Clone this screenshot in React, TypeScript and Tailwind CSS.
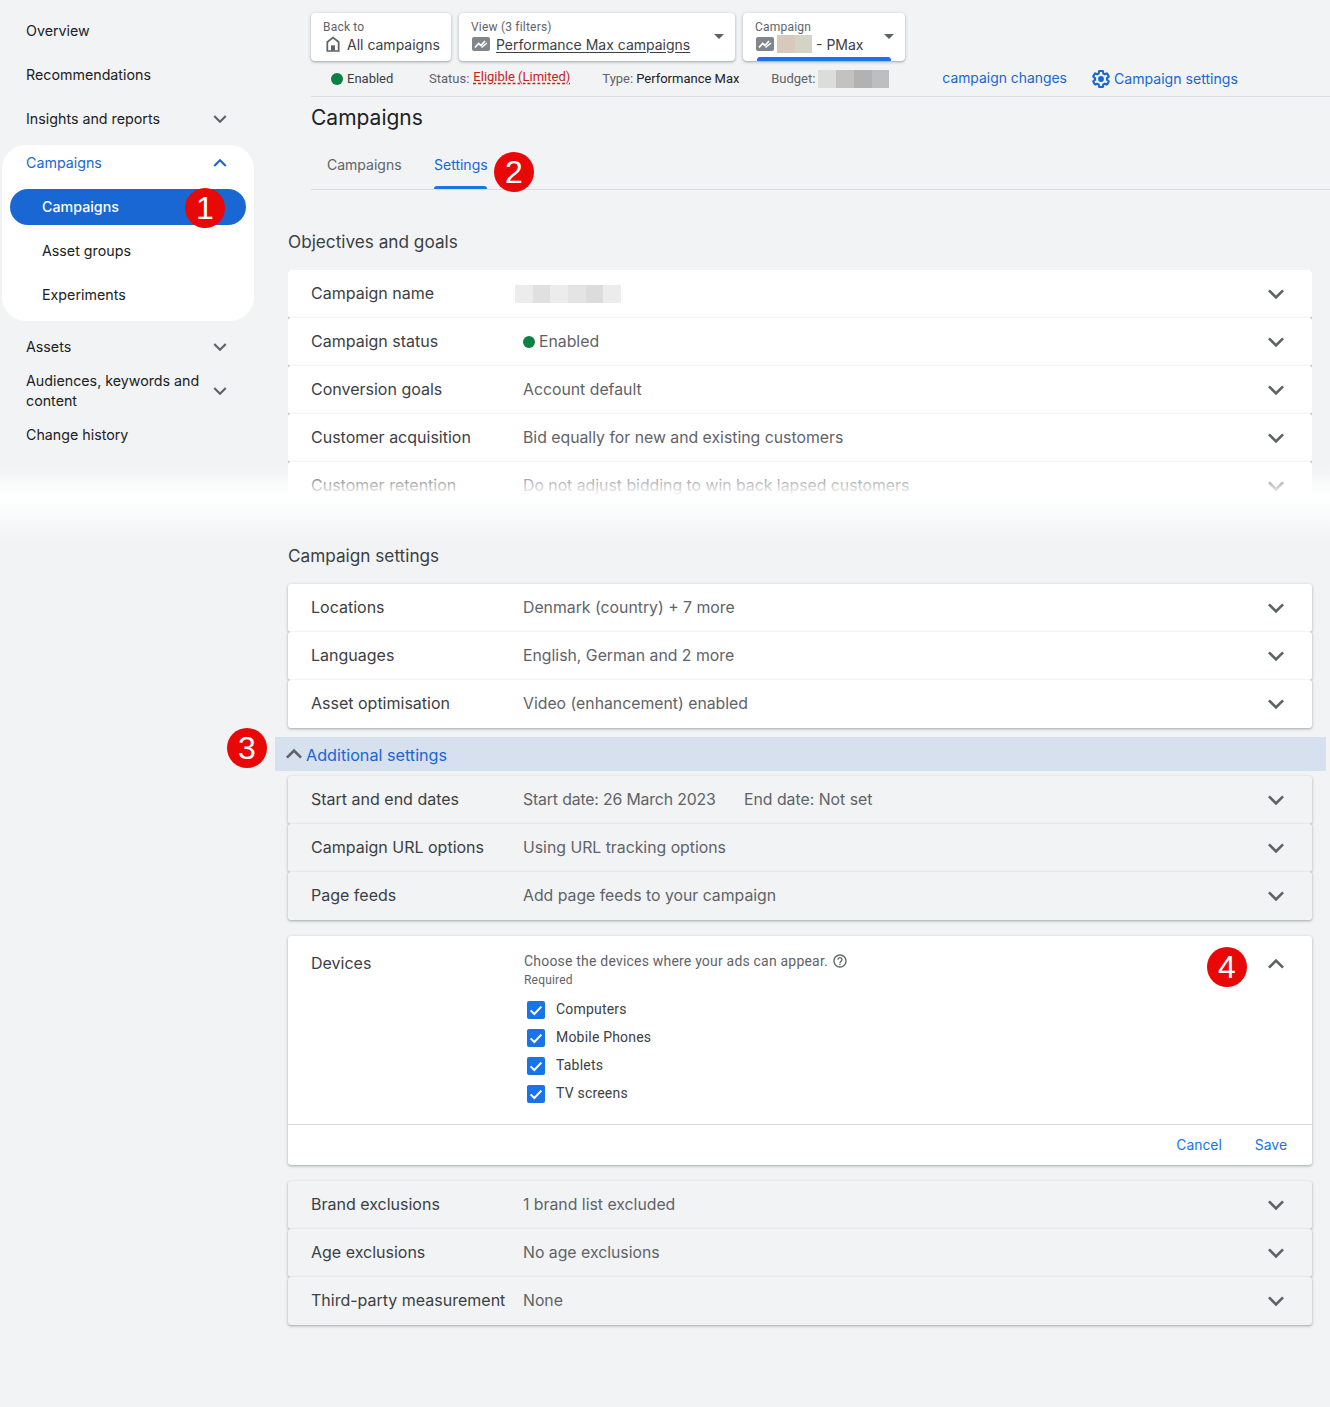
const gsans = "font-['Inter','Noto_Sans',sans-serif]";

const Chevron = ({ up = false, size = 32, color = "#5f6368" }: { up?: boolean; size?: number; color?: string }) => (
  <svg width={size} height={size} viewBox="0 0 24 24" fill={color} className="shrink-0">
    <path d={up ? "M7.41 15.41L12 10.83l4.59 4.58L18 14l-6-6-6 6z" : "M16.59 8.59L12 13.17 7.41 8.59 6 10l6 6 6-6z"} />
  </svg>
);

const Badge = ({ n, className }: { n: number; className: string }) => (
  <div className={`absolute z-20 flex h-10 w-10 items-center justify-center rounded-full bg-[#e80808] font-['Liberation_Sans',sans-serif] text-[32px] leading-none text-white ${className}`}>
    {n}
  </div>
);

const Spark = () => (
  <svg width="18" height="16" viewBox="0 0 18 16" className="ml-[1px] shrink-0">
    <rect width="18" height="14" y="1" rx="2" fill="#80868b" />
    <path d="M3 11.5l3.6-4 2.4 2L13 5" fill="none" stroke="#fff" strokeWidth="1.7" />
    <path d="M9.5 11.5L15 7" fill="none" stroke="#fff" strokeWidth="1.5" />
  </svg>
);

const Blur = ({ colors, className }: { colors: string[]; className: string }) => (
  <span className={`flex ${className}`}>
    {colors.map((c, i) => (
      <span key={i} className="h-full flex-1" style={{ backgroundColor: c }} />
    ))}
  </span>
);

const SideItem = ({ label, chevron }: { label: string; chevron?: boolean }) => (
  <div className="flex h-11 items-center justify-between pl-[26px] pr-[21px] text-[14.25px] leading-5 text-[#202124]">
    <span className="w-[180px]">{label}</span>
    {chevron && <Chevron size={26} />}
  </div>
);

const Row = ({ label, value, gray }: { label: string; value: React.ReactNode; gray?: boolean }) => (
  <div className={`flex h-12 items-center rounded-[3px] pl-[23px] pr-5 shadow-[0_1px_2px_rgba(60,64,67,0.3),0_1px_3px_1px_rgba(60,64,67,0.1)] ${gray ? "bg-[#f1f3f4]" : "bg-white"}`}>
    <div className="w-[212px] shrink-0 pb-[3px] text-[16px] text-[#3c4043]">{label}</div>
    <div className="flex-1 pb-[1px] text-[15.8px] text-[#5f6368]">{value}</div>
    <Chevron />
  </div>
);

const Check = ({ label }: { label: string }) => (
  <div className="flex h-7 items-center gap-[11px] pl-[3px]">
    <span className="mt-[1px] flex h-[18px] w-[18px] items-center justify-center rounded-[2px] bg-[#1a73e8]">
      <svg width="16" height="16" viewBox="0 0 24 24" fill="none" stroke="#fff" strokeWidth="3"><path d="M4 12.5l5.5 5.5L20 7" /></svg>
    </span>
    <span className="font-['Roboto',sans-serif] text-[14px] tracking-[0.2px] text-[#3c4043]">{label}</span>
  </div>
);

const Card = ({ w, label, children, arrow, bar }: { w: string; label: string; children: React.ReactNode; arrow?: boolean; bar?: boolean }) => (
  <div className={`relative h-12 rounded-[4px] bg-white pl-3 pt-[6px] shadow-[0_1px_2px_rgba(60,64,67,0.3),0_1px_3px_1px_rgba(60,64,67,0.12)] ${w}`}>
    <div className="font-['Roboto',sans-serif] text-[12px] leading-4 tracking-[0.2px] text-[#5f6368]">{label}</div>
    <div className="-mt-[1px] flex h-5 items-center gap-[6px] text-[14px] text-[#3c4043]">{children}</div>
    {arrow && <span className="absolute right-[11px] top-[21px] h-0 w-0 border-x-[5px] border-t-[5px] border-x-transparent border-t-[#5f6368]" />}
    {bar && <span className="absolute bottom-0 left-[14px] h-1 w-[134px] rounded-t-[3px] bg-[#1a73e8]" />}
  </div>
);

export default function App() {
  return (
    <div className={`relative flex min-h-[1407px] overflow-hidden bg-[#f1f3f4] ${gsans}`}>
      <aside className="w-[254px] shrink-0 pt-[9px]">
        <SideItem label="Overview" />
        <SideItem label="Recommendations" />
        <SideItem label="Insights and reports" chevron />
        <div className="relative ml-[2px] mt-1 h-[176px] rounded-[24px] bg-white">
          <div className="flex h-9 items-center justify-between pl-6 pr-[21px] text-[14.25px] text-[#1967d2]">
            <span className="pb-[1px]">Campaigns</span>
            <Chevron size={26} up color="#1967d2" />
          </div>
          <div className="mx-2 mt-2 flex h-9 items-center rounded-full bg-[#1967d2] pb-[1px] pl-8 text-[14.25px] font-medium text-white">Campaigns</div>
          <div className="mt-1 flex h-11 items-center pb-[1px] pl-10 text-[14.25px] text-[#202124]">Asset groups</div>
          <div className="flex h-11 items-center pb-[1px] pl-10 text-[14.25px] text-[#202124]">Experiments</div>
          <Badge n={1} className="left-[183px] top-[43px]" />
        </div>
        <div className="mt-1">
          <SideItem label="Assets" chevron />
          <SideItem label="Audiences, keywords and content" chevron />
          <SideItem label="Change history" />
        </div>
      </aside>

      <main className="relative w-[1076px] pl-[34px]">
        <div className="ml-[23px] flex gap-2 pt-[13px]">
          <Card w="w-[140px]" label="Back to">
            <svg width="16" height="16" viewBox="0 0 24 24" className="ml-[2px] shrink-0" fill="none" stroke="#5f6368" strokeWidth="2.6"><path d="M3.5 22.5V9L12 2.5 20.5 9v13.5z" /><path d="M9 22v-8h6v8" fill="#5f6368" stroke="none" /></svg>
            All campaigns
          </Card>
          <Card w="w-[276px]" label="View (3 filters)" arrow>
            <Spark />
            <span className="underline underline-offset-2">Performance Max campaigns</span>
          </Card>
          <Card w="w-[162px]" label="Campaign" arrow bar>
            <Spark />
            <Blur colors={["#d9c9bd", "#d3d3c8"]} className="-ml-[3px] h-[18px] w-[35px]" />
            <span className="-ml-[2px]">- PMax</span>
          </Card>
        </div>

        <div className="ml-[23px] flex h-[36px] items-center border-b border-[#dadce0] font-['Roboto',sans-serif] text-[13px] text-[#5f6368]">
          <span className="ml-5 mr-1 h-3 w-3 rounded-full bg-[#0d8043]" />
          <span className="w-[82px] text-[#3c4043]">Enabled</span>
          <span className="mr-1">Status:</span>
          <span className="-mt-[3px] w-[129px] text-[#c5221f] underline decoration-dashed underline-offset-2">Eligible (Limited)</span>
          <span className="mr-[3px]">Type:</span>
          <span className="w-[135px] text-[#202124]">Performance Max</span>
          <span className="mr-[3px]">Budget:</span>
          <Blur colors={["#dcdcda", "#c3c2c0", "#b1b2b1", "#bcbec2"]} className="h-[18px] w-[71px]" />
          <span className={`ml-[53px] text-[13.9px] text-[#1967d2] ${gsans}`}>campaign changes</span>
          <svg width="20" height="20" viewBox="0 0 24 24" className="ml-[24px] mr-[3px]" fill="none" stroke="#1967d2" strokeWidth="2.5">
            <path d="M19.14 12.94c.04-.3.06-.61.06-.94 0-.32-.02-.64-.07-.94l2.03-1.58c.18-.14.23-.41.12-.61l-1.92-3.32c-.12-.22-.37-.29-.59-.22l-2.39.96c-.5-.38-1.03-.7-1.62-.94L14.4 2.81c-.04-.24-.24-.41-.48-.41h-3.84c-.24 0-.43.17-.47.41L9.25 5.35c-.59.24-1.13.57-1.62.94l-2.39-.96c-.22-.08-.47 0-.59.22L2.74 8.87c-.12.21-.08.47.12.61l2.03 1.58c-.05.3-.09.63-.09.94s.02.64.07.94l-2.03 1.58c-.18.14-.23.41-.12.61l1.92 3.32c.12.22.37.29.59.22l2.39-.96c.5.38 1.03.7 1.62.94l.36 2.54c.05.24.24.41.48.41h3.84c.24 0 .44-.17.47-.41l.36-2.54c.59-.24 1.13-.56 1.62-.94l2.39.96c.22.08.47 0 .59-.22l1.92-3.32c.12-.22.07-.47-.12-.61l-2.01-1.58z" />
            <circle cx="12" cy="12" r="3.5" fill="#1967d2" stroke="none" />
          </svg>
          <span className={`text-[14.1px] text-[#1967d2] ${gsans}`}>Campaign settings</span>
        </div>

        <h1 className="ml-[23px] mt-[7px] text-[21px] leading-7 text-[#202124]">Campaigns</h1>

        <div className="relative ml-[23px] mt-[14px] flex h-[44px] border-b border-[#dadce0] text-[14px]">
          <div className="flex w-[107px] items-start pl-4 pt-[8px] text-[#5f6368]">Campaigns</div>
          <div className="relative ml-[16px] pt-[8px] text-[#1967d2]">
            Settings
            <span className="absolute bottom-0 left-0 h-[3px] w-[53px] rounded-t-[3px] bg-[#1a73e8]" />
          </div>
          <Badge n={2} className="left-[183px] top-[6px]" />
        </div>

        <h2 className="mt-[40px] text-[17.2px] leading-6 text-[#3c4043]">Objectives and goals</h2>

        <div className="mr-[18px] mt-4 h-[230px] overflow-hidden pb-2">
          <Row label="Campaign name" value={<Blur colors={["#ececec", "#e0e0e0", "#ececec", "#e4e4e4", "#dcdcdc", "#ececec"]} className="ml-[-8px] h-[18px] w-[106px]" />} />
          <Row label="Campaign status" value={<span className="flex items-center gap-1"><span className="h-3 w-3 rounded-full bg-[#0d8043]" />Enabled</span>} />
          <Row label="Conversion goals" value="Account default" />
          <Row label="Customer acquisition" value="Bid equally for new and existing customers" />
          <Row label="Customer retention" value="Do not adjust bidding to win back lapsed customers" />
        </div>

        <h2 className="mt-[44px] text-[17.2px] leading-6 text-[#3c4043]">Campaign settings</h2>

        <div className="mr-[18px] mt-4">
          <Row label="Locations" value="Denmark (country) + 7 more" />
          <Row label="Languages" value="English, German and 2 more" />
          <Row label="Asset optimisation" value="Video (enhancement) enabled" />
        </div>

        <div className="relative -ml-[13px] mr-1 mt-[9px] flex h-[34px] items-center bg-[#d6e0ef] pl-[3px] text-[16.2px] text-[#1967d2]">
          <Chevron up />
          <span className="-ml-[4px] pt-[3px]">Additional settings</span>
          <Badge n={3} className="left-[-48px] top-[-9px]" />
        </div>

        <div className="mr-[18px] mt-[5px]">
          <Row gray label="Start and end dates" value={<span className="flex"><span className="w-[221px] tracking-[-0.15px]">Start date: 26 March 2023</span><span>End date: Not set</span></span>} />
          <Row gray label="Campaign URL options" value="Using URL tracking options" />
          <Row gray label="Page feeds" value="Add page feeds to your campaign" />
        </div>

        <div className="relative mr-[18px] mt-4 h-[229px] rounded-[3px] bg-white shadow-[0_1px_2px_rgba(60,64,67,0.3),0_1px_3px_1px_rgba(60,64,67,0.1)]">
          <div className="flex h-[188px] pl-[23px] pr-5">
            <div className="w-[213px] shrink-0 pt-[15px] text-[16px] text-[#3c4043]">Devices</div>
            <div className="flex-1 pt-4 font-['Roboto',sans-serif]">
              <div className="flex items-center gap-[4px] text-[14px] leading-[18px] tracking-[0.2px] text-[#5f6368]">
                Choose the devices where your ads can appear.
                <svg width="16" height="16" viewBox="0 0 24 24" fill="#5f6368"><path d="M11 18h2v-2h-2v2zm1-16C6.48 2 2 6.48 2 12s4.48 10 10 10 10-4.48 10-10S17.52 2 12 2zm0 18c-4.41 0-8-3.59-8-8s3.59-8 8-8 8 3.59 8 8-3.59 8-8 8zm0-14c-2.21 0-4 1.79-4 4h2c0-1.1.9-2 2-2s2 .9 2 2c0 2-3 1.75-3 5h2c0-2.25 3-2.5 3-5 0-2.21-1.79-4-4-4z" /></svg>
              </div>
              <div className="mb-[7px] mt-[2px] text-[12px] leading-4 tracking-[0.2px] text-[#5f6368]">Required</div>
              <Check label="Computers" />
              <Check label="Mobile Phones" />
              <Check label="Tablets" />
              <Check label="TV screens" />
            </div>
            <div className="pt-3"><Chevron up /></div>
          </div>
          <div className="flex h-[41px] items-center justify-end gap-[33px] border-t border-[#dadce0] pr-[25px] text-[13.9px] text-[#1a73e8]">
            <span>Cancel</span>
            <span>Save</span>
          </div>
          <Badge n={4} className="left-[919px] top-[11px]" />
        </div>

        <div className="mr-[18px] mt-4">
          <Row gray label="Brand exclusions" value="1 brand list excluded" />
          <Row gray label="Age exclusions" value="No age exclusions" />
          <Row gray label="Third-party measurement" value="None" />
        </div>
      </main>

      {/* torn edge between the two screenshots */}
      <div className="pointer-events-none absolute inset-x-0 top-[466px] h-[76px] bg-gradient-to-b from-white/0 via-white via-40% to-[#f1f3f4]" />
    </div>
  );
}
